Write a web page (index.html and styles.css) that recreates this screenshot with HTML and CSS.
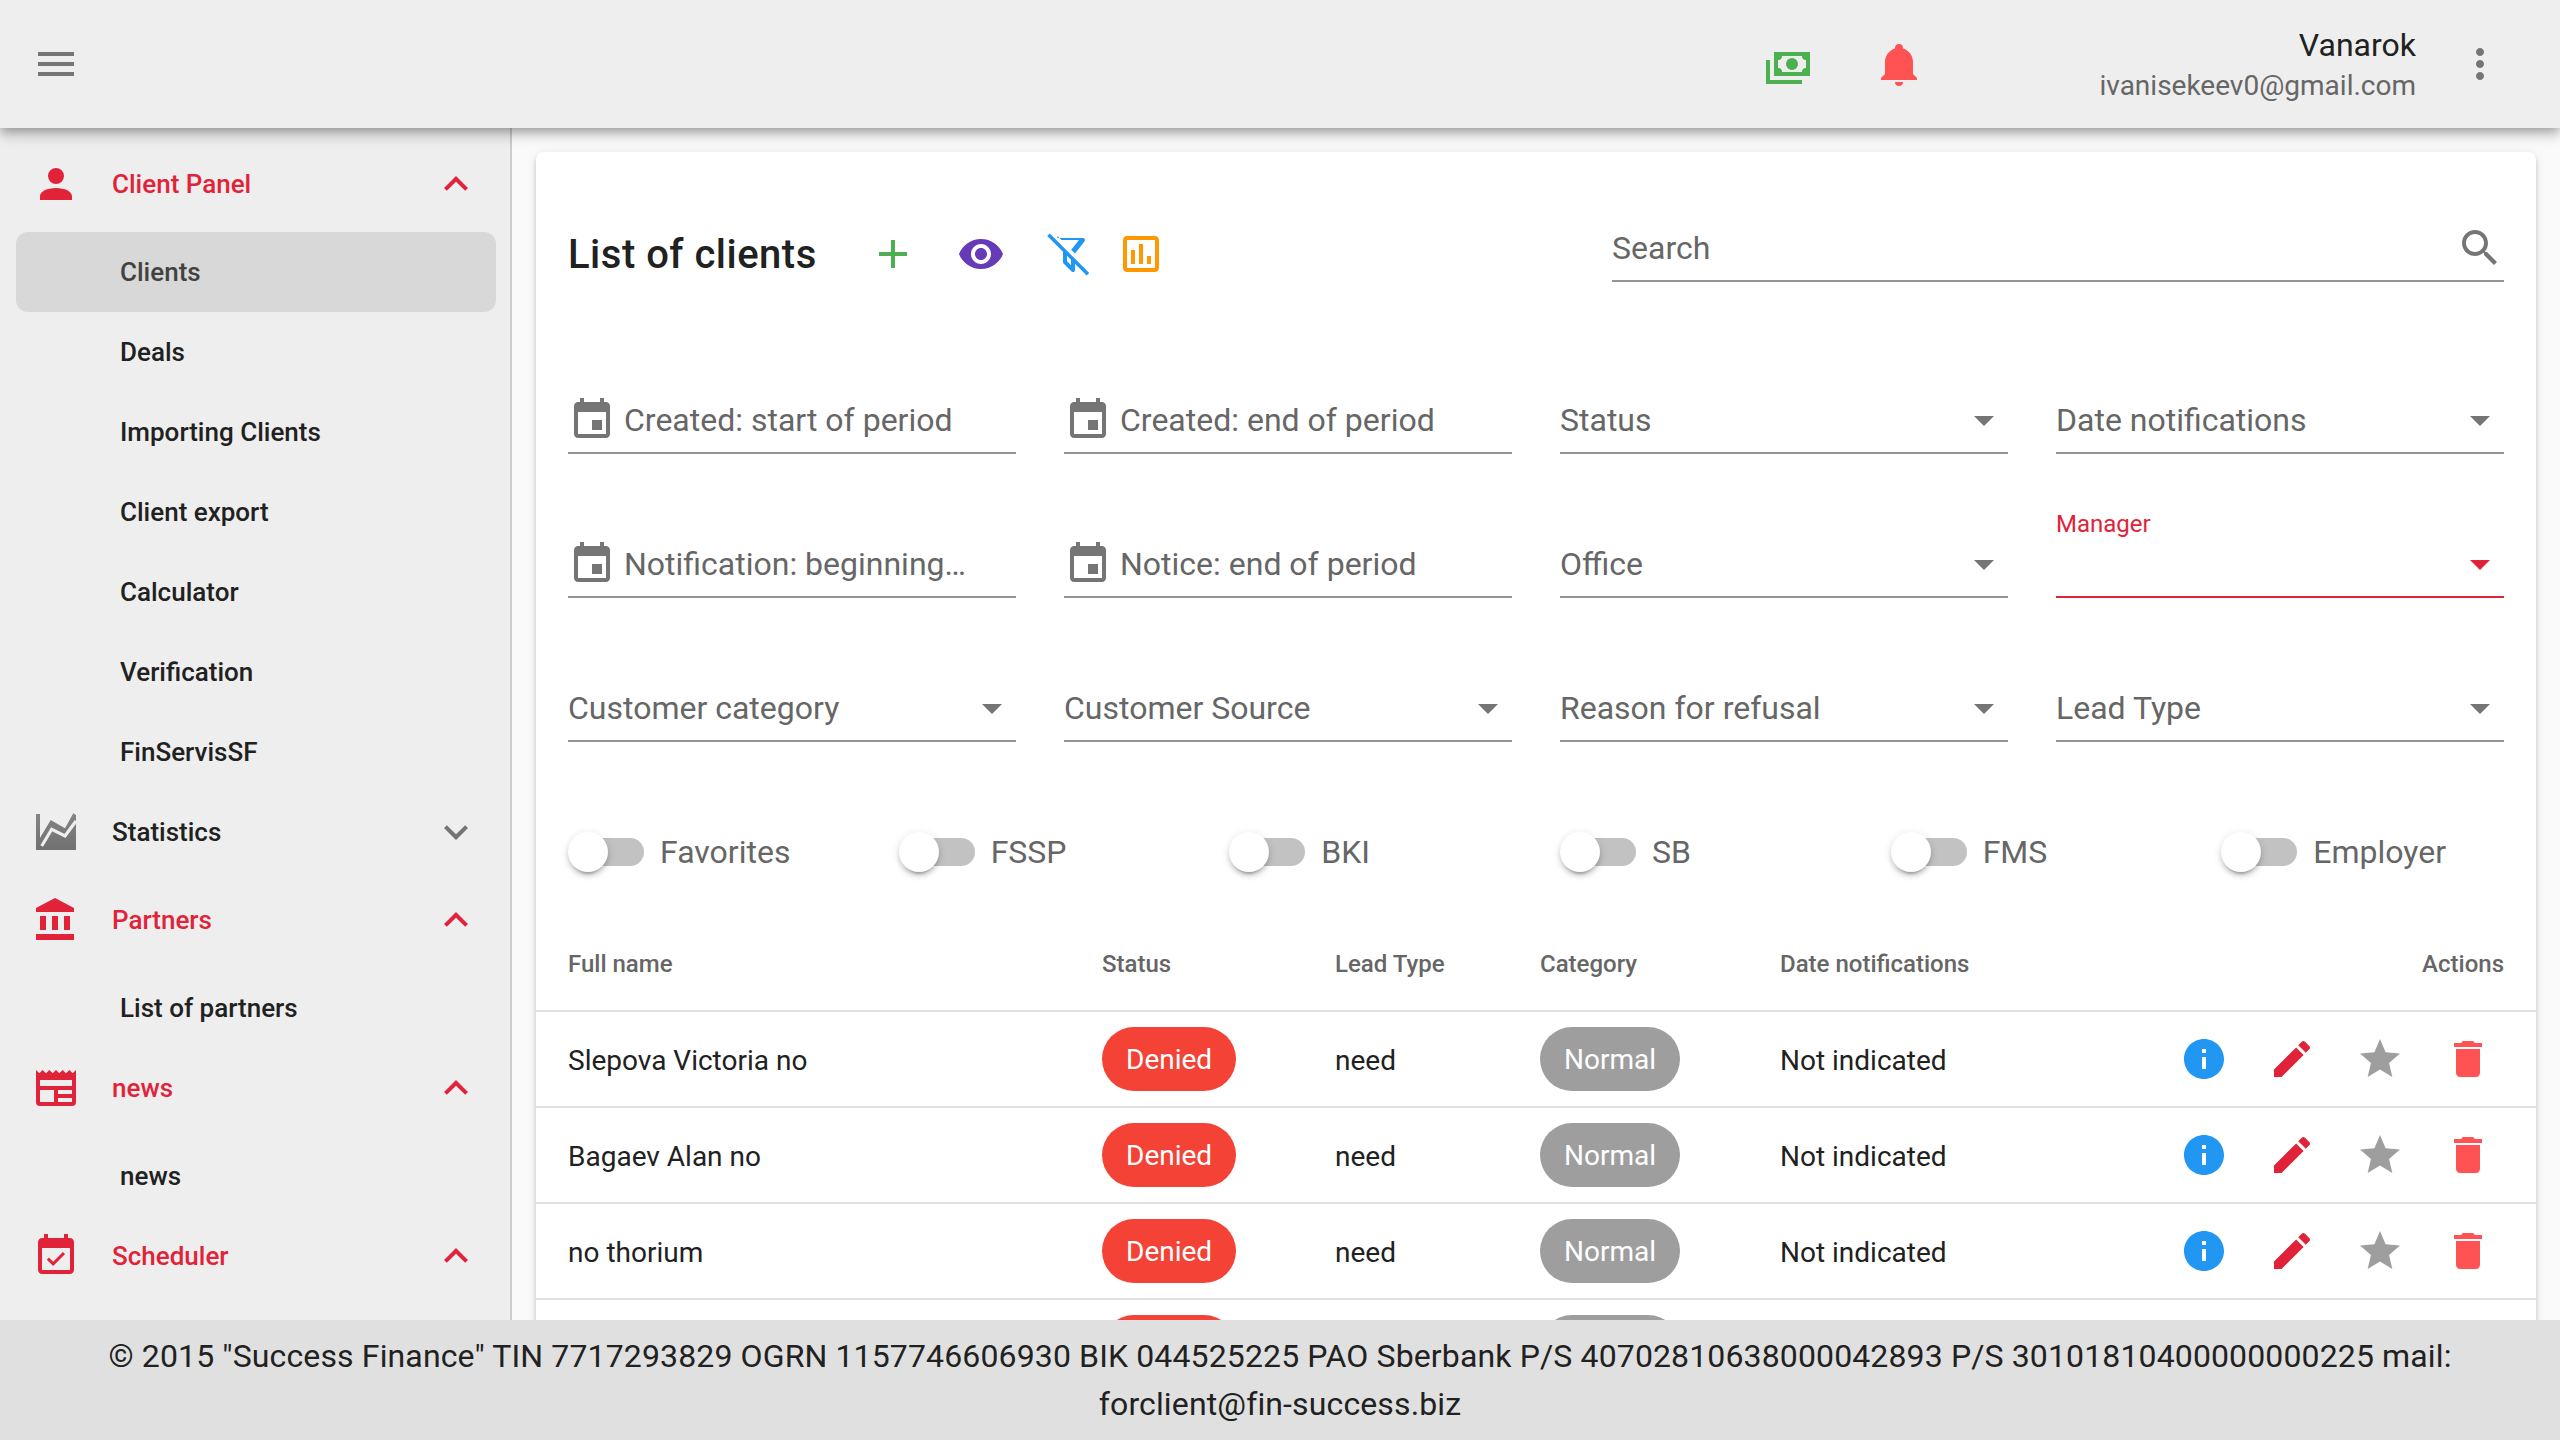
FILE: index.html
```html
<!DOCTYPE html>
<html lang="en">
<head>
    <meta charset="UTF-8">
    <meta name="viewport" content="width=device-width, initial-scale=1.0">
    <title>List of clients</title>
    <link rel="stylesheet" href="styles.css">
</head>
<body>
    <svg class="sprite" xmlns="http://www.w3.org/2000/svg">
        <defs>
            <linearGradient id="stat-fade" x1="0" y1="0" x2="0" y2="1">
                <stop offset="0" stop-color="#858585"/>
                <stop offset="1" stop-color="#707070"/>
            </linearGradient>
        </defs>
        <symbol id="i-menu" viewBox="0 0 24 24"><path d="M3 18h18v-2H3v2zm0-5h18v-2H3v2zm0-7v2h18V6H3z"/></symbol>
        <symbol id="i-cash" viewBox="0 0 24 24"><path d="M5,6H23V18H5V6M14,9A3,3 0 0,1 17,12A3,3 0 0,1 14,15A3,3 0 0,1 11,12A3,3 0 0,1 14,9M9,8A2,2 0 0,1 7,10V14A2,2 0 0,1 9,16H19A2,2 0 0,1 21,14V10A2,2 0 0,1 19,8H9M1,10H3V20H19V22H1V10Z" fill-rule="evenodd"/></symbol>
        <symbol id="i-bell" viewBox="0 0 24 24"><path d="M21,19V20H3V19L5,17V11C5,7.9 7.03,5.17 10,4.29C10,4.19 10,4.1 10,4A2,2 0 0,1 12,2A2,2 0 0,1 14,4C14,4.1 14,4.19 14,4.29C16.97,5.17 19,7.9 19,11V17L21,19M14,21A2,2 0 0,1 12,23A2,2 0 0,1 10,21"/></symbol>
        <symbol id="i-more" viewBox="0 0 24 24"><path d="M12 8c1.1 0 2-.9 2-2s-.9-2-2-2-2 .9-2 2 .9 2 2 2zm0 2c-1.1 0-2 .9-2 2s.9 2 2 2 2-.9 2-2-.9-2-2-2zm0 6c-1.1 0-2 .9-2 2s.9 2 2 2 2-.9 2-2-.9-2-2-2z"/></symbol>
        <symbol id="i-person" viewBox="0 0 24 24"><path d="M12,4A4,4 0 0,1 16,8A4,4 0 0,1 12,12A4,4 0 0,1 8,8A4,4 0 0,1 12,4M12,14C16.42,14 20,15.79 20,18V20H4V18C4,15.79 7.58,14 12,14Z"/></symbol>
        <symbol id="i-up" viewBox="0 0 24 24"><path d="M7.41 15.41L12 10.83l4.59 4.58L18 14l-6-6-6 6z"/></symbol>
        <symbol id="i-down" viewBox="0 0 24 24"><path d="M7.41 8.59L12 13.17l4.59-4.58L18 10l-6 6-6-6z"/></symbol>
        <symbol id="i-bank" viewBox="0 0 24 24"><path d="M4 10v7h3v-7H4zm6 0v7h3v-7h-3zM2 22h19v-3H2v3zm14-12v7h3v-7h-3zm-4.500-9L2 6v2h19V6l-9.500-5z"/></symbol>
        <symbol id="i-news" viewBox="0 0 24 24"><path d="M20,11H4V8H20M20,15H13V13H20M20,19H13V17H20M11,19H4V13H11M20.330,4.670L18.670,3L17,4.670L15.330,3L13.670,4.670L12,3L10.330,4.670L8.670,3L7,4.670L5.330,3L3.670,4.670L2,3V19A2,2 0 0,0 4,21H20A2,2 0 0,0 22,19V3L20.330,4.670Z" fill-rule="evenodd"/></symbol>
        <symbol id="i-sched" viewBox="0 0 24 24"><path d="M16.530 11.060L15.470 10l-4.880 4.880-2.120-2.120-1.060 1.060L10.590 17l5.940-5.940zM19 3h-1V1h-2v2H8V1H6v2H5c-1.110 0-1.990.9-1.990 2L3 19c0 1.100.89 2 2 2h14c1.100 0 2-.9 2-2V5c0-1.100-.9-2-2-2zm0 16H5V8h14v11z"/></symbol>
        <symbol id="i-plus" viewBox="0 0 24 24"><path d="M19 13h-6v6h-2v-6H5v-2h6V5h2v6h6v2z"/></symbol>
        <symbol id="i-eye" viewBox="0 0 24 24"><path d="M12 4.500C7 4.500 2.730 7.610 1 12c1.730 4.390 6 7.500 11 7.500s9.270-3.110 11-7.500c-1.730-4.390-6-7.500-11-7.500zM12 17c-2.760 0-5-2.240-5-5s2.240-5 5-5 5 2.240 5 5-2.240 5-5 5zm0-8c-1.660 0-3 1.340-3 3s1.340 3 3 3 3-1.340 3-3-1.340-3-3-3z"/></symbol>
        <symbol id="i-filter-off" viewBox="0 0 24 24"><path d="M2.390 1.730L1.110 3L9 10.890V15.870C8.960 16.160 9.060 16.470 9.290 16.700L13.300 20.710C13.690 21.100 14.320 21.100 14.710 20.710C14.940 20.500 15.040 20.180 15 19.880V16.890L20.840 22.730L22.110 21.460L15 14.350V14.340L13 12.350L11 10.350L4.150 3.500L2.390 1.730M6.210 3L8.200 5H16.960L13.110 9.910L15 11.800L19.790 5.620C20.130 5.190 20.050 4.560 19.620 4.220C19.430 4.080 19.220 4 19 4H6.210M11 12.890L13 14.890V17.580L11.580 16.160L11 15.580V12.890Z" fill-rule="evenodd"/></symbol>
        <symbol id="i-poll" viewBox="0 0 24 24"><path d="M19 3H5c-1.100 0-2 .9-2 2v14c0 1.100.9 2 2 2h14c1.100 0 2-.9 2-2V5c0-1.100-.9-2-2-2zm0 16H5V5h14v14zM7 10h2v7H7zm4-3h2v10h-2zm4 6h2v4h-2z"/></symbol>
        <symbol id="i-search" viewBox="0 0 24 24"><path d="M15.500 14h-.79l-.28-.27C15.410 12.590 16 11.110 16 9.500 16 5.910 13.090 3 9.500 3S3 5.910 3 9.500 5.910 16 9.500 16c1.610 0 3.090-.59 4.230-1.570l.27.28v.79l5 4.990L20.490 19l-4.990-5zm-6 0C7.010 14 5 11.990 5 9.500S7.010 5 9.500 5 14 7.010 14 9.500 11.990 14 9.500 14z"/></symbol>
        <symbol id="i-event" viewBox="0 0 24 24"><path d="M17 12h-5v5h5v-5zM16 1v2H8V1H6v2H5c-1.110 0-1.990.9-1.990 2L3 19c0 1.100.89 2 2 2h14c1.100 0 2-.9 2-2V5c0-1.100-.9-2-2-2h-1V1h-2zm3 18H5V8h14v11z"/></symbol>
        <symbol id="i-caret" viewBox="0 0 24 24"><path d="M7 10l5 5 5-5z"/></symbol>
        <symbol id="i-info" viewBox="0 0 24 24"><path d="M12 2C6.480 2 2 6.480 2 12s4.480 10 10 10 10-4.480 10-10S17.520 2 12 2zm1 15h-2v-6h2v6zm0-8h-2V7h2v2z"/></symbol>
        <symbol id="i-edit" viewBox="0 0 24 24"><path d="M3 17.250V21h3.750L17.810 9.940l-3.750-3.750L3 17.250zM20.710 7.040c.39-.39.39-1.020 0-1.410l-2.340-2.340c-.39-.39-1.020-.39-1.410 0l-1.830 1.830 3.750 3.750 1.830-1.830z"/></symbol>
        <symbol id="i-star" viewBox="0 0 24 24"><path d="M12 17.270L18.180 21l-1.640-7.030L22 9.240l-7.190-.61L12 2 9.190 8.630 2 9.240l5.460 4.730L5.820 21z"/></symbol>
        <symbol id="i-trash" viewBox="0 0 24 24"><path d="M6 19c0 1.100.9 2 2 2h8c1.100 0 2-.9 2-2V7H6v12zM19 4h-3.500l-1-1h-5l-1 1H5v2h14V4z"/></symbol>
    </svg>

    <header class="topbar">
        <svg class="icon grey"><use href="#i-menu"/></svg>
        <div class="topbar-space"></div>
        <svg class="icon green"><use href="#i-cash"/></svg>
        <svg class="icon coral bell"><use href="#i-bell"/></svg>
        <div class="user">
            <div class="user-name">Vanarok</div>
            <div class="user-mail">ivanisekeev0@gmail.com</div>
        </div>
        <svg class="icon grey"><use href="#i-more"/></svg>
    </header>

    <div class="middle">
        <nav class="sidebar">
            <div class="group open">
                <svg class="icon"><use href="#i-person"/></svg>
                <span class="group-title">Client Panel</span>
                <svg class="icon"><use href="#i-up"/></svg>
            </div>
            <a class="item active">Clients</a>
            <a class="item">Deals</a>
            <a class="item">Importing Clients</a>
            <a class="item">Client export</a>
            <a class="item">Calculator</a>
            <a class="item">Verification</a>
            <a class="item">FinServisSF</a>
            <div class="group">
                <svg class="icon" viewBox="0 0 48 48">
                    <path d="M4 6h4v24L18.700 12 33 20.300 41.300 5.300 44 7v35H4z" fill="url(#stat-fade)"/>
                    <path d="M9.700 38l10-16.700L33 28l11-15" class="stat-line"/>
                </svg>
                <span class="group-title">Statistics</span>
                <svg class="icon grey"><use href="#i-down"/></svg>
            </div>
            <div class="group open">
                <svg class="icon"><use href="#i-bank"/></svg>
                <span class="group-title">Partners</span>
                <svg class="icon"><use href="#i-up"/></svg>
            </div>
            <a class="item">List of partners</a>
            <div class="group open">
                <svg class="icon"><use href="#i-news"/></svg>
                <span class="group-title">news</span>
                <svg class="icon"><use href="#i-up"/></svg>
            </div>
            <a class="item">news</a>
            <div class="group open">
                <svg class="icon"><use href="#i-sched"/></svg>
                <span class="group-title">Scheduler</span>
                <svg class="icon"><use href="#i-up"/></svg>
            </div>
        </nav>

        <main class="content">
            <section class="card">
                <div class="card-head">
                    <div class="card-title">
                        <h1>List of clients</h1>
                        <svg class="icon green tool-add"><use href="#i-plus"/></svg>
                        <svg class="icon purple tool-eye"><use href="#i-eye"/></svg>
                        <svg class="icon blue tool-filter"><use href="#i-filter-off"/></svg>
                        <svg class="icon orange tool-chart"><use href="#i-poll"/></svg>
                    </div>
                    <div class="field search">
                        <span class="field-text">Search</span>
                        <svg class="icon grey"><use href="#i-search"/></svg>
                    </div>
                </div>

                <div class="filters">
                    <div class="field"><svg class="icon grey date-icon"><use href="#i-event"/></svg><span class="field-text">Created: start of period</span></div>
                    <div class="field"><svg class="icon grey date-icon"><use href="#i-event"/></svg><span class="field-text">Created: end of period</span></div>
                    <div class="field"><span class="field-text">Status</span><svg class="icon grey"><use href="#i-caret"/></svg></div>
                    <div class="field"><span class="field-text">Date notifications</span><svg class="icon grey"><use href="#i-caret"/></svg></div>

                    <div class="field"><svg class="icon grey date-icon"><use href="#i-event"/></svg><span class="field-text">Notification: beginning…</span></div>
                    <div class="field"><svg class="icon grey date-icon"><use href="#i-event"/></svg><span class="field-text">Notice: end of period</span></div>
                    <div class="field"><span class="field-text">Office</span><svg class="icon grey"><use href="#i-caret"/></svg></div>
                    <div class="field focused"><span class="float-label">Manager</span><span class="field-text"></span><svg class="icon"><use href="#i-caret"/></svg></div>

                    <div class="field"><span class="field-text">Customer category</span><svg class="icon grey"><use href="#i-caret"/></svg></div>
                    <div class="field"><span class="field-text">Customer Source</span><svg class="icon grey"><use href="#i-caret"/></svg></div>
                    <div class="field"><span class="field-text">Reason for refusal</span><svg class="icon grey"><use href="#i-caret"/></svg></div>
                    <div class="field"><span class="field-text">Lead Type</span><svg class="icon grey"><use href="#i-caret"/></svg></div>
                </div>

                <div class="switches">
                    <label class="switch"><span class="track"><span class="thumb"></span></span>Favorites</label>
                    <label class="switch"><span class="track"><span class="thumb"></span></span>FSSP</label>
                    <label class="switch"><span class="track"><span class="thumb"></span></span>BKI</label>
                    <label class="switch"><span class="track"><span class="thumb"></span></span>SB</label>
                    <label class="switch"><span class="track"><span class="thumb"></span></span>FMS</label>
                    <label class="switch"><span class="track"><span class="thumb"></span></span>Employer</label>
                </div>

                <table class="clients">
                    <thead>
                        <tr>
                            <th class="col-name">Full name</th>
                            <th class="col-status">Status</th>
                            <th class="col-lead">Lead Type</th>
                            <th class="col-cat">Category</th>
                            <th class="col-date">Date notifications</th>
                            <th class="col-actions">Actions</th>
                        </tr>
                    </thead>
                    <tbody>
                        <tr>
                            <td class="col-name cell-text">Slepova Victoria no</td>
                            <td><span class="chip chip-red">Denied</span></td>
                            <td class="cell-text">need</td>
                            <td><span class="chip chip-grey">Normal</span></td>
                            <td class="cell-text">Not indicated</td>
                            <td class="col-actions"><div class="actions">
                                <svg class="icon blue"><use href="#i-info"/></svg>
                                <svg class="icon"><use href="#i-edit"/></svg>
                                <svg class="icon mid-grey"><use href="#i-star"/></svg>
                                <svg class="icon coral"><use href="#i-trash"/></svg>
                            </div></td>
                        </tr>
                        <tr>
                            <td class="col-name cell-text">Bagaev Alan no</td>
                            <td><span class="chip chip-red">Denied</span></td>
                            <td class="cell-text">need</td>
                            <td><span class="chip chip-grey">Normal</span></td>
                            <td class="cell-text">Not indicated</td>
                            <td class="col-actions"><div class="actions">
                                <svg class="icon blue"><use href="#i-info"/></svg>
                                <svg class="icon"><use href="#i-edit"/></svg>
                                <svg class="icon mid-grey"><use href="#i-star"/></svg>
                                <svg class="icon coral"><use href="#i-trash"/></svg>
                            </div></td>
                        </tr>
                        <tr>
                            <td class="col-name cell-text">no thorium</td>
                            <td><span class="chip chip-red">Denied</span></td>
                            <td class="cell-text">need</td>
                            <td><span class="chip chip-grey">Normal</span></td>
                            <td class="cell-text">Not indicated</td>
                            <td class="col-actions"><div class="actions">
                                <svg class="icon blue"><use href="#i-info"/></svg>
                                <svg class="icon"><use href="#i-edit"/></svg>
                                <svg class="icon mid-grey"><use href="#i-star"/></svg>
                                <svg class="icon coral"><use href="#i-trash"/></svg>
                            </div></td>
                        </tr>
                        <tr>
                            <td class="col-name"></td>
                            <td><span class="chip chip-red"></span></td>
                            <td></td>
                            <td><span class="chip chip-grey"></span></td>
                            <td></td>
                            <td></td>
                        </tr>
                    </tbody>
                </table>
            </section>
        </main>
    </div>

    <footer class="footer">© 2015 "Success Finance" TIN 7717293829 OGRN 1157746606930 BIK 044525225 PAO Sberbank P/S 40702810638000042893 P/S 30101810400000000225 mail: forclient@fin-success.biz</footer>
</body>
</html>
```

FILE: styles.css
```css
:root {
    --red: #e12339;
    --coral: #ff5252;
    --bar-bg: #eeeeee;
    --text: #212121;
    --muted: #666666;
    --line: #949494;
    --font-family: 'Roboto', 'Liberation Sans', sans-serif;
}

* {
    box-sizing: border-box;
}

body {
    font-family: var(--font-family);
    margin: 0;
    height: 100vh;
    display: flex;
    flex-direction: column;
    overflow: hidden;
    background: #fafafa;
    color: var(--text);
}

/* display:none would drop the gradient, so the sprite is only collapsed */
.sprite {
    position: absolute;
    width: 0;
    height: 0;
}

.icon {
    width: 48px;
    height: 48px;
    flex: none;
    fill: currentColor;
    color: var(--red);
}

.grey { color: #757575; }
.mid-grey { color: #9e9e9e; }
.green { color: #4caf50; }
.coral { color: var(--coral); }
.blue { color: #2196f3; }
.purple { color: #673ab7; }
.orange { color: #ff9800; }

/* top bar */
.topbar {
    height: 128px;
    flex: none;
    display: flex;
    align-items: center;
    padding: 0 56px 0 32px;
    background: var(--bar-bg);
    position: relative;
    z-index: 3;
    box-shadow: 0 4px 8px -2px rgba(0, 0, 0, 0.2), 0 8px 10px rgba(0, 0, 0, 0.14), 0 2px 20px rgba(0, 0, 0, 0.12);
}

.topbar-space {
    flex: 1;
}

.bell {
    margin-left: 63px;
}

.user {
    width: 493px;
    margin-right: 40px;
    padding-top: 4px;
    text-align: right;
}

.user-name {
    font-size: 32px;
    line-height: 40px;
}

.user-mail {
    font-size: 28px;
    line-height: 42px;
    color: var(--muted);
}

/* sidebar and content */
.middle {
    flex: 1;
    min-height: 0;
    display: flex;
}

.sidebar {
    width: 512px;
    flex: none;
    padding: 16px 0 0;
    background: var(--bar-bg);
    border-right: 2px solid #cccccc;
    overflow: hidden;
}

.group {
    height: 80px;
    display: flex;
    align-items: center;
    padding: 0 30px 0 32px;
    font-size: 26px;
    font-weight: 500;
}

.group.open {
    color: var(--red);
    margin-bottom: 8px;
}

.group + .group:not(.open),
.item + .group:not(.open) {
    margin-bottom: 8px;
}

.group-title {
    flex: 1;
    margin-left: 32px;
}

.stat-line {
    fill: none;
    stroke: var(--bar-bg);
    stroke-width: 3.2;
}

.item {
    display: flex;
    align-items: center;
    height: 80px;
    margin: 0 14px 0 16px;
    padding-left: 104px;
    border-radius: 12px;
    font-size: 26px;
    font-weight: 500;
}

.item.active {
    background: #d8d8d8;
    color: #424242;
}

.content {
    flex: 1;
    min-width: 0;
    padding: 24px 24px 0;
    overflow: hidden;
}

.card {
    background: #fff;
    border-radius: 8px;
    padding-top: 72px;
    box-shadow: 0 4px 4px rgba(0, 0, 0, 0.14), 0 6px 2px -4px rgba(0, 0, 0, 0.12), 0 2px 10px rgba(0, 0, 0, 0.12);
}

.card-head {
    display: flex;
    justify-content: space-between;
    padding: 0 32px;
}

.card-title {
    display: flex;
    align-items: center;
    height: 48px;
    margin-top: 6px;
}

.card-title h1 {
    margin: 0;
    font-size: 40px;
    font-weight: 500;
    letter-spacing: 0.5px;
    width: 301px;
}

.tool-eye { margin-left: 40px; }
.tool-filter { margin-left: 40px; }
.tool-chart { margin-left: 24px; }

/* form fields */
.field {
    position: relative;
    height: 58px;
    display: flex;
    align-items: flex-start;
    border-bottom: 2px solid var(--line);
    min-width: 0;
}

.field.focused {
    border-bottom-color: var(--red);
}

.field-text {
    flex: 1;
    font-size: 32px;
    line-height: 48px;
    color: var(--muted);
    white-space: nowrap;
}

.search {
    width: 892px;
}

.date-icon {
    margin-right: 8px;
}

.float-label {
    position: absolute;
    left: 0;
    top: -32px;
    font-size: 24px;
    line-height: 32px;
    color: var(--red);
}

.filters {
    display: grid;
    grid-template-columns: repeat(4, 1fr);
    column-gap: 48px;
    row-gap: 86px;
    margin-top: 114px;
    padding: 0 32px;
}

.switches {
    display: grid;
    grid-template-columns: repeat(6, 1fr);
    column-gap: 48px;
    margin-top: 90px;
    padding: 0 32px;
}

.switch {
    display: flex;
    align-items: center;
    height: 40px;
    font-size: 32px;
    color: var(--muted);
}

.track {
    position: relative;
    width: 72px;
    height: 28px;
    margin: 0 16px 0 4px;
    border-radius: 14px;
    background: #c2c2c2;
}

.thumb {
    position: absolute;
    left: -4px;
    top: -6px;
    width: 40px;
    height: 40px;
    border-radius: 50%;
    background: #fff;
    box-shadow: 0 6px 2px -4px rgba(0, 0, 0, 0.2), 0 4px 4px rgba(0, 0, 0, 0.14), 0 2px 10px rgba(0, 0, 0, 0.12);
}

/* table */
.clients {
    width: 100%;
    margin-top: 44px;
    border-collapse: separate;
    border-spacing: 0;
    table-layout: fixed;
}

.clients th,
.clients td {
    padding: 0;
    text-align: left;
    border-bottom: 2px solid #e0e0e0;
}

.clients th {
    height: 96px;
    padding-top: 1px;
    font-size: 24px;
    font-weight: 500;
    color: var(--muted);
}

.clients td {
    height: 96px;
    font-size: 28px;
}

.clients .cell-text { padding-top: 2px; }

.clients .col-name { width: 566px; padding-left: 32px; }
.clients .col-status { width: 233px; }
.clients .col-lead { width: 205px; }
.clients .col-cat { width: 240px; }
.clients .col-date { width: 320px; }
.clients .col-actions { padding-right: 32px; text-align: right; }

.chip {
    display: inline-block;
    height: 64px;
    min-width: 134px;
    padding: 0 24px;
    border-radius: 32px;
    line-height: 66px;
    color: #fff;
    vertical-align: middle;
}

.chip-red { background: #f44336; }
.chip-grey { background: #9e9e9e; min-width: 140px; }

.actions {
    display: flex;
    justify-content: flex-end;
    gap: 40px;
    padding-right: 12px;
}

.footer {
    height: 120px;
    flex: none;
    padding: 12px 100px;
    background: #e0e0e0;
    position: relative;
    z-index: 2;
    text-align: center;
    font-size: 32px;
    line-height: 48px;
    letter-spacing: 0.13px;
}
```
